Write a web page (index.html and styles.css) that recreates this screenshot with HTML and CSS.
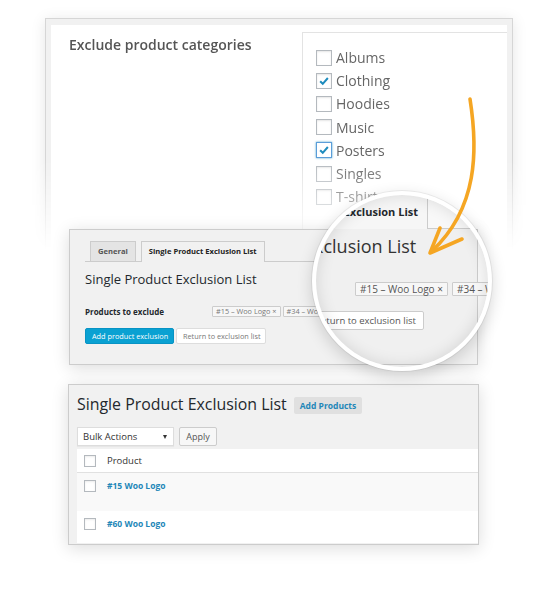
FILE: index.html
```html
<!DOCTYPE html>
<html lang="en">
<head>
    <meta charset="UTF-8">
    <meta name="viewport" content="width=device-width, initial-scale=1.0">
    <title>Single Product Exclusion List</title>
    <link rel="stylesheet" href="styles.css">
</head>
<body>
    <div class="stage">
        <!-- Category settings (fades out at the bottom) -->
        <div class="cats-wrap">
            <div class="cats-panel">
                <div class="cats-inner">
                    <div class="cats-label">Exclude product categories</div>
                    <div class="cat-box">
                        <div class="cat-item"><span class="check"></span>Albums</div>
                        <div class="cat-item"><span class="check is-checked"><svg viewBox="0 0 16 16"><path d="M3.6 8.2 L6.6 11.2 L12.4 4.6"/></svg></span>Clothing</div>
                        <div class="cat-item"><span class="check"></span>Hoodies</div>
                        <div class="cat-item"><span class="check"></span>Music</div>
                        <div class="cat-item"><span class="check is-checked is-focus"><svg viewBox="0 0 16 16"><path d="M3.6 8.2 L6.6 11.2 L12.4 4.6"/></svg></span>Posters</div>
                        <div class="cat-item"><span class="check"></span>Singles</div>
                        <div class="cat-item"><span class="check"></span>T-shirts</div>
                    </div>
                </div>
            </div>
        </div>

        <!-- Exclusion form -->
        <div class="tab-panel">
            <div class="tabs">
                <span class="tab">General</span>
                <span class="tab active">Single Product Exclusion List</span>
            </div>
            <h2 class="tab-title">Single Product Exclusion List</h2>
            <div class="exclude-row">
                <span class="exclude-label">Products to exclude</span>
                <div class="tokens">
                    <span class="token">#15 – Woo Logo ×</span>
                    <span class="token">#34 – Woo Logo ×</span>
                </div>
            </div>
            <div class="actions">
                <span class="btn btn-primary">Add product exclusion</span>
                <span class="btn btn-light">Return to exclusion list</span>
            </div>
        </div>

        <!-- Exclusion list table -->
        <div class="list-panel">
            <div class="list-head">
                <h2 class="list-title">Single Product Exclusion List</h2>
                <span class="add-btn">Add Products</span>
            </div>
            <div class="bulk-row">
                <span class="select">Bulk Actions<i class="caret"></i></span>
                <span class="apply">Apply</span>
            </div>
            <div class="list-table">
                <div class="list-row row-head"><span class="cb"></span><span>Product</span></div>
                <div class="list-row row-odd"><span class="cb"></span><a class="row-link">#15 Woo Logo</a></div>
                <div class="list-row row-even"><span class="cb"></span><a class="row-link">#60 Woo Logo</a></div>
            </div>
        </div>

        <!-- Magnifier over the form -->
        <div class="loupe">
            <div class="loupe-panel"></div>
            <div class="loupe-tab">Exclusion List</div>
            <div class="loupe-title">Exclusion List</div>
            <div class="loupe-tokens">
                <span class="token">#15 – Woo Logo ×</span>
                <span class="token">#34 – Woo Logo ×</span>
            </div>
            <span class="loupe-btn">Return to exclusion list</span>
        </div>

        <svg class="arrow" width="548" height="591" viewBox="0 0 548 591">
            <path d="M470 99 C478 150 478 208 432 251"/>
            <path d="M440 228 L430 253 L462 239"/>
        </svg>
    </div>
</body>
</html>
```

FILE: styles.css
```css
* {
    margin: 0;
    padding: 0;
    box-sizing: border-box;
}

body {
    background: #fff;
    font-family: 'Open Sans', 'Liberation Sans', sans-serif;
    color: #333;
}

.stage {
    position: relative;
    width: 548px;
    height: 591px;
    overflow: hidden;
}

/* Categories panel */
.cats-wrap {
    margin-left: 25px;
    width: 508px;
    height: 250px;
    padding: 18px 20px 0;
    -webkit-mask-image: linear-gradient(to bottom, #000 64%, transparent 100%);
    mask-image: linear-gradient(to bottom, #000 64%, transparent 100%);
}

.cats-panel {
    height: 232px;
    background: #f1f1f1;
    border: 1px solid #d6d6d6;
    padding: 6px 5px 0;
    box-shadow: 0 2px 14px rgba(0, 0, 0, 0.1);
}

.cats-inner {
    display: flex;
    height: 100%;
    background: #fff;
}

.cats-label {
    flex: 0 0 251px;
    padding: 10px 0 0 18px;
    font-size: 14px;
    font-weight: 600;
    line-height: 20px;
    color: #555;
}

.cat-box {
    flex: 1;
    margin-top: 7px;
    border-top: 1px solid #e3e3e3;
    border-left: 1px solid #e3e3e3;
    padding: 13px 0 0 13px;
}

.cat-item {
    display: flex;
    align-items: center;
    gap: 4px;
    height: 23.2px;
    font-size: 14px;
    color: #666;
}

.check {
    width: 16px;
    height: 16px;
    border: 1px solid #b4b9be;
    background: #fff;
    box-shadow: inset 0 1px 2px rgba(0, 0, 0, 0.1);
}

.check svg {
    display: block;
    width: 14px;
    height: 14px;
}

.check path {
    fill: none;
    stroke: #1e8cbe;
    stroke-width: 2.3;
}

.check.is-focus {
    border-color: #5b9dd9;
    box-shadow: 0 0 2px rgba(30, 140, 190, 0.8);
}

/* Exclusion form */
.tab-panel {
    position: relative;
    z-index: 1;
    margin: -21px 0 0 69px;
    width: 409px;
    height: 136px;
    background: #f1f1f1;
    border: 1px solid #ccc;
    padding: 11px 0 0 15px;
    box-shadow: 0 3px 16px rgba(0, 0, 0, 0.14);
}

.tabs {
    display: flex;
    align-items: flex-end;
    gap: 5px;
    height: 21px;
    padding-left: 5px;
    border-bottom: 1px solid #ccc;
}

.tab {
    height: 20px;
    padding: 0 7px;
    border: 1px solid #ccc;
    border-bottom: 0;
    background: #e4e4e4;
    color: #555;
    font-size: 7.6px;
    font-weight: 700;
    line-height: 19px;
}

.tab.active {
    height: 21px;
    margin-bottom: -1px;
    background: #f1f1f1;
    color: #222;
}

.tab-title {
    margin-top: 9px;
    font-size: 13px;
    font-weight: 400;
    line-height: 17px;
    color: #23282d;
}

.exclude-row {
    display: flex;
    align-items: center;
    margin-top: 18px;
}

.exclude-label {
    flex: 0 0 127px;
    font-size: 8px;
    font-weight: 700;
    color: #23282d;
}

.tokens {
    display: flex;
    gap: 2px;
}

.token {
    height: 11px;
    padding: 0 3px;
    border: 1px solid #ccc;
    border-radius: 1px;
    background: #f7f7f7;
    color: #777;
    font-size: 7.3px;
    line-height: 9px;
    white-space: nowrap;
}

.actions {
    display: flex;
    gap: 2px;
    margin-top: 11px;
}

.btn {
    height: 16px;
    padding: 0 6px;
    border: 1px solid;
    border-radius: 2px;
    font-size: 7.3px;
    line-height: 14px;
    text-align: center;
    white-space: nowrap;
}

.btn-primary {
    width: 89px;
    background: #0aa1d2;
    border-color: #0893c4;
    color: #fff;
}

.btn-light {
    width: 90px;
    background: #fff;
    border-color: #ddd;
    color: #777;
}

/* Exclusion list */
.list-panel {
    margin: 19px 0 0 68px;
    width: 411px;
    height: 161px;
    background: #f1f1f1;
    border: 1px solid #ccc;
    padding: 9px 0 0 8px;
    box-shadow: 0 3px 16px rgba(0, 0, 0, 0.14);
}

.list-head {
    display: flex;
    align-items: flex-start;
    gap: 7px;
}

.list-title {
    font-size: 15.9px;
    font-weight: 400;
    line-height: 20px;
    color: #23282d;
}

.add-btn {
    margin-top: 3px;
    height: 17px;
    padding: 0 6px;
    border-radius: 2px;
    background: #e0e0e0;
    color: #2387b8;
    font-size: 8.5px;
    font-weight: 700;
    line-height: 17px;
}

.bulk-row {
    display: flex;
    gap: 5px;
    margin-top: 13px;
}

.select {
    display: flex;
    align-items: center;
    justify-content: space-between;
    width: 97px;
    height: 19px;
    padding: 0 6px 0 5px;
    background: #fff;
    border: 1px solid #ddd;
    box-shadow: 0 1px 1px rgba(0, 0, 0, 0.04);
    font-size: 9.5px;
    color: #333;
}

.caret {
    border-left: 2.5px solid transparent;
    border-right: 2.5px solid transparent;
    border-top: 4px solid #333;
}

.apply {
    width: 38px;
    height: 19px;
    border: 1px solid #ccc;
    border-radius: 2px;
    background: #f7f7f7;
    color: #555;
    font-size: 9px;
    line-height: 17px;
    text-align: center;
}

.list-table {
    margin-top: 3px;
}

.list-row {
    display: flex;
    align-items: center;
    gap: 11px;
    padding-left: 7px;
    font-size: 9.5px;
    line-height: 12px;
    color: #333;
}

.row-head {
    height: 24px;
    background: #fff;
    border-bottom: 1px solid #e1e1e1;
}

.row-odd,
.row-even {
    align-items: flex-start;
    padding-top: 7px;
}

.row-odd {
    height: 38px;
    background: #f9f9f9;
}

.row-even {
    height: 32px;
    background: #fff;
}

.cb {
    width: 12px;
    height: 12px;
    border: 1px solid #b4b9be;
    background: #fff;
    box-shadow: inset 0 1px 2px rgba(0, 0, 0, 0.08);
}

.row-link {
    color: #2387b8;
    font-size: 8.5px;
    font-weight: 700;
}

/* Magnifier */
.loupe {
    position: absolute;
    left: 312px;
    top: 191px;
    z-index: 3;
    width: 180px;
    height: 180px;
    border: 4px solid #fff;
    border-radius: 50%;
    background: #f8f8f8;
    overflow: hidden;
    box-shadow: 0 0 0 1px rgba(0, 0, 0, 0.06), 0 5px 16px rgba(0, 0, 0, 0.16);
}

.loupe::after {
    content: '';
    position: absolute;
    inset: 0;
    border-radius: 50%;
    box-shadow: inset 0 0 16px rgba(0, 0, 0, 0.12);
}

.loupe-panel {
    position: absolute;
    left: -10px;
    top: 33px;
    width: 172px;
    height: 137px;
    background: #f0f0f0;
    border: 1px solid #ccc;
    border-left: 0;
}

.loupe-tab {
    position: absolute;
    left: -10px;
    top: -6px;
    width: 122px;
    height: 40px;
    padding: 16px 9px 0 0;
    background: #f6f6f6;
    border-right: 1px solid #ccc;
    color: #23282d;
    font-size: 11px;
    font-weight: 700;
    line-height: 14px;
    text-align: right;
}

.loupe-title {
    position: absolute;
    left: -12px;
    top: 41px;
    font-size: 18px;
    line-height: 20px;
    color: #333;
    white-space: nowrap;
}

.loupe-tokens {
    position: absolute;
    left: 39px;
    top: 87px;
    display: flex;
    gap: 4px;
}

.loupe .token {
    height: 14px;
    padding: 0 4px;
    font-size: 10px;
    line-height: 12px;
    color: #555;
}

.loupe-btn {
    position: absolute;
    right: 64px;
    top: 116px;
    height: 19px;
    padding: 0 7px;
    background: #fff;
    border: 1px solid #ccc;
    border-radius: 2px;
    color: #555;
    font-size: 9.5px;
    line-height: 17px;
    white-space: nowrap;
}

/* Pointer arrow */
.arrow {
    position: absolute;
    left: 0;
    top: 0;
    z-index: 4;
    pointer-events: none;
}

.arrow path {
    fill: none;
    stroke: #f5a623;
    stroke-width: 3.6;
    stroke-linecap: round;
    stroke-linejoin: round;
}
```
